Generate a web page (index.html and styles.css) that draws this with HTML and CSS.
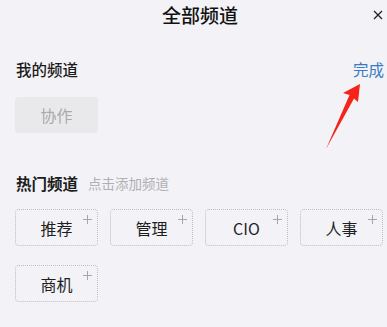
FILE: index.html
```html
<!DOCTYPE html>
<html lang="zh">
<head>
<meta charset="utf-8">
<link rel="stylesheet" href="styles.css">
</head>
<body>
<div class="page">
  <header class="top">
    <span></span>
    <h1 class="title">全部频道</h1>
    <span class="close">
      <svg width="10" height="10" viewBox="0 0 10 10"><path d="M1 1L9 9M9 1L1 9" stroke="#222" stroke-width="1.3" fill="none"/></svg>
    </span>
  </header>

  <section class="mine">
    <div class="row">
      <span class="label">我的频道</span>
      <span class="done">完成</span>
    </div>
    <div class="tags">
      <div class="tag fixed">协作</div>
    </div>
  </section>

  <section class="hot">
    <div class="row">
      <span class="label bold">热门频道</span>
      <span class="hint">点击添加频道</span>
    </div>
    <div class="tags">
      <div class="tag add">推荐<span class="plus"></span></div>
      <div class="tag add">管理<span class="plus"></span></div>
      <div class="tag add">CIO<span class="plus"></span></div>
      <div class="tag add">人事<span class="plus"></span></div>
      <div class="tag add">商机<span class="plus"></span></div>
    </div>
  </section>

  <svg class="arrow" width="387" height="327" viewBox="0 0 387 327">
    <polygon points="360,84 358,102 354,98.5 326,149 349.5,95 343,93" fill="#f5231a"/>
  </svg>
</div>
</body>
</html>
```

FILE: styles.css
```css
html, body {
  margin: 0;
  padding: 0;
}
body {
  background: #f3f2f7;
  font-family: "Noto Sans CJK SC", "Noto Sans", sans-serif;
  color: #222;
}
.page {
  position: relative;
  width: 387px;
  height: 327px;
  overflow: hidden;
}
.top {
  display: grid;
  grid-template-columns: 1fr auto 1fr;
  align-items: center;
  height: 30px;
}
.title {
  margin: 0;
  padding-left: 13px;
  font-size: 19px;
  font-weight: 500;
  line-height: 30px;
  color: #111;
}
.close {
  justify-self: end;
  display: flex;
  padding-right: 4px;
}
.row {
  display: flex;
  align-items: center;
  height: 22px;
  padding: 0 3px 0 16px;
}
.mine {
  margin-top: 28px;
}
.mine .row {
  justify-content: space-between;
}
.label {
  font-size: 15.5px;
  font-weight: 500;
  color: #1c1c1c;
}
.label.bold {
  font-weight: 700;
}
.done {
  font-size: 15.5px;
  color: #3a7cc2;
}
.hint {
  margin-left: 10px;
  font-size: 13.5px;
  color: #b0afb4;
}
.tags {
  display: grid;
  grid-template-columns: repeat(4, 83px);
  column-gap: 12px;
  row-gap: 19px;
  padding-left: 15px;
}
.mine .tags {
  margin-top: 17px;
}
.hot {
  margin-top: 39px;
}
.hot .tags {
  margin-top: 15px;
}
.tag {
  position: relative;
  box-sizing: border-box;
  height: 37px;
  border-radius: 4px;
  display: flex;
  align-items: center;
  justify-content: center;
  font-size: 16px;
  color: #1e1e1e;
}
.tag.fixed {
  height: 36px;
  background: #e9e9ec;
  color: #a9a9ad;
}
.tag.add {
  border: 1px dotted #bdbcc1;
}
.plus {
  position: absolute;
  top: 5px;
  right: 5px;
  width: 9px;
  height: 9px;
}
.plus::before,
.plus::after {
  content: "";
  position: absolute;
  background: #a5a5aa;
}
.plus::before {
  left: 0;
  top: 4px;
  width: 9px;
  height: 1px;
}
.plus::after {
  left: 4px;
  top: 0;
  width: 1px;
  height: 9px;
}
.arrow {
  position: absolute;
  left: 0;
  top: 0;
  pointer-events: none;
}
```
